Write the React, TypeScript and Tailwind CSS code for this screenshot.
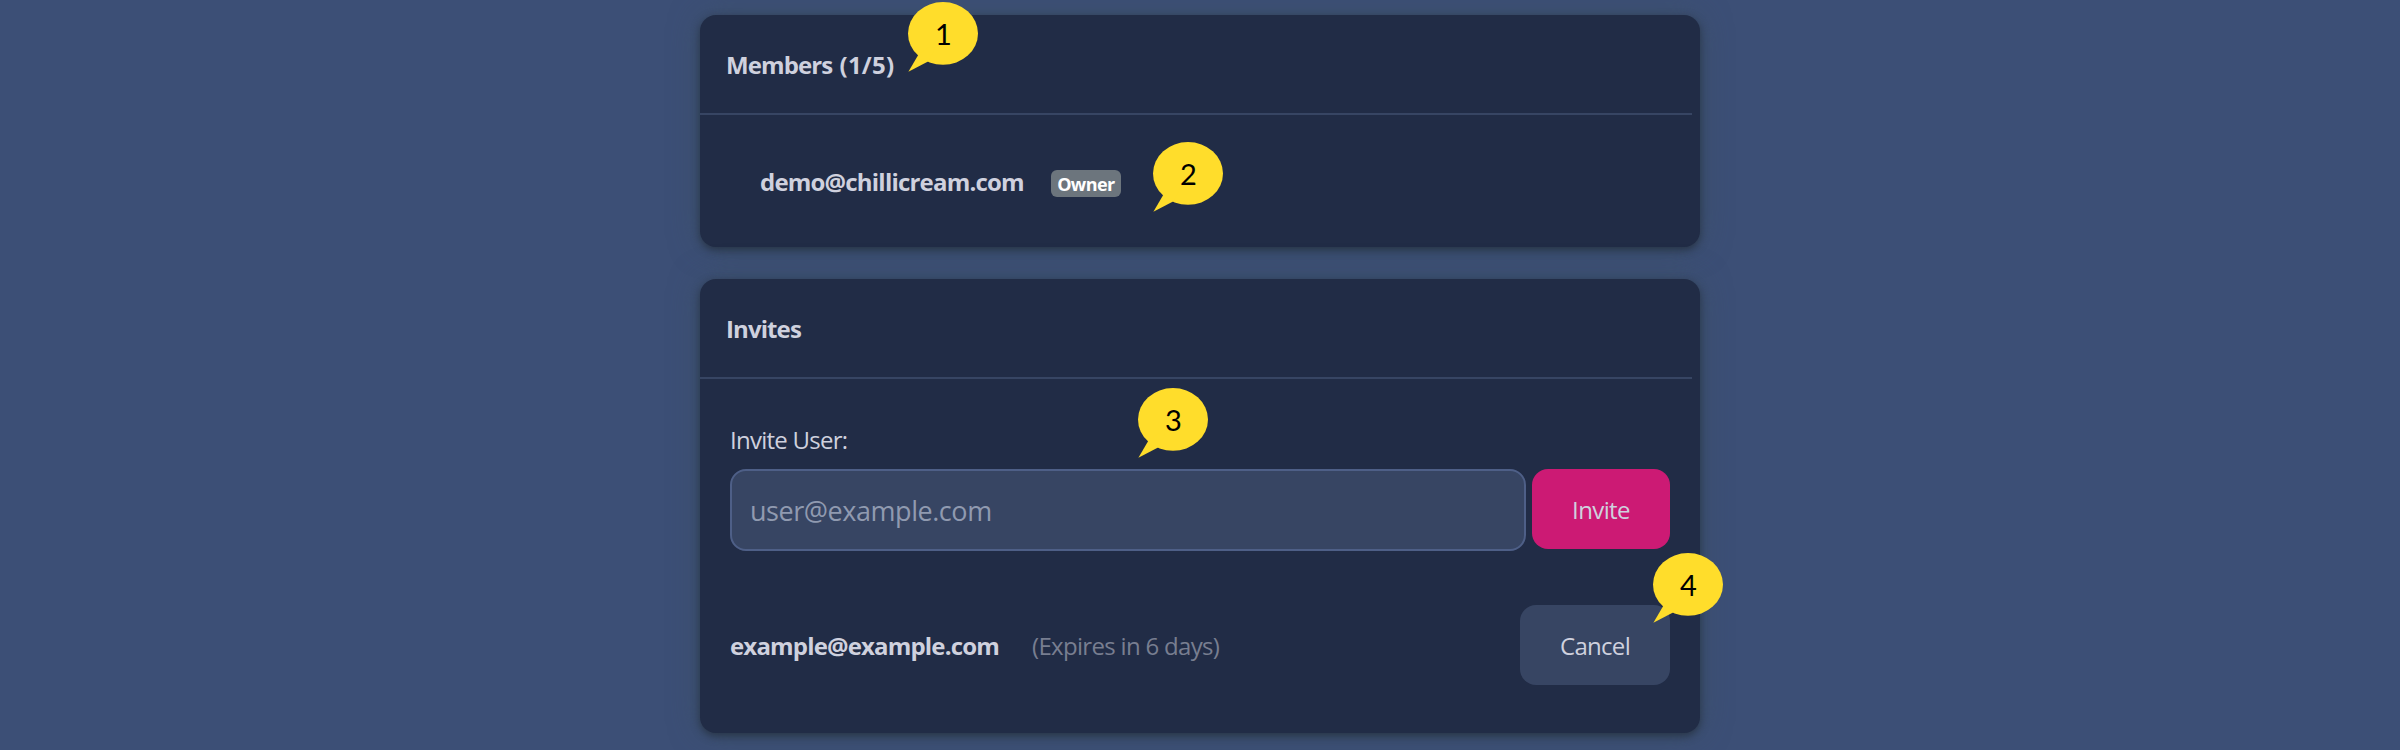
import type { ReactNode } from "react";

function Bubble({ n, place }: { n: number; place: string }) {
  return (
    <div className={`absolute h-[72px] w-[70px] ${place}`}>
      <svg className="absolute inset-0" width="70" height="72" viewBox="0 0 70 72" fill="#ffdd2b" aria-hidden="true">
        <ellipse cx="35" cy="32.4" rx="35" ry="31.4" />
        <path d="M10.5 53.5 L0.4 70.8 L21 60 L30 40 Z" />
      </svg>
      <span className="relative block pt-[16px] pl-[1px] text-center font-[Lato,sans-serif] text-[29px] leading-[34px] text-black">
        {n}
      </span>
    </div>
  );
}

function Card({ title, className, children }: { title: ReactNode; className: string; children: ReactNode }) {
  return (
    <section
      className={`flex w-[1000px] flex-col rounded-[16px] bg-[#212c46] shadow-[0_3px_9px_rgba(33,44,56,0.75),0_0_30px_rgba(60,80,96,0.6)] ${className}`}
    >
      <header className="mr-2 flex h-[100px] shrink-0 items-center border-b-2 border-[#374563] pt-[2px] pl-[26px] font-bold">
        {title}
      </header>
      {children}
    </section>
  );
}

export default function App() {
  return (
    <main className="relative flex h-[750px] w-full flex-col items-center gap-8 overflow-hidden bg-[#3c4f76] pt-[15px] font-['Open_Sans','Noto_Sans',sans-serif] text-[24px] leading-[36px] text-[#cfd1de]">
      <Card
        title={
          <h2 className="tracking-[-0.9px] [word-spacing:2px]">
            Members <span className="tracking-[0.2px]">(1/5)</span>
          </h2>
        }
        className="h-[232px]"
      >
        <div className="flex h-[134px] items-center pt-[2px] pl-[60px]">
          <span className="font-bold tracking-[-0.8px]">demo@chillicream.com</span>
          <span className="mt-[3px] ml-[27px] flex h-[27px] w-[70px] items-center justify-center rounded-[6px] bg-[#6c757d] text-[18px] leading-[18px] font-bold tracking-[-0.6px] text-white">
            Owner
          </span>
        </div>
      </Card>

      <Card title={<h2 className="tracking-[-0.9px]">Invites</h2>} className="h-[454px]">
        <div className="flex flex-col px-[30px] pt-[43px]">
          <label htmlFor="invite-email" className="mb-[11px] tracking-[-0.75px]">
            Invite User:
          </label>
          <div className="flex items-start gap-[6px]">
            <input
              id="invite-email"
              type="email"
              placeholder="user@example.com"
              className="h-[82px] w-[796px] rounded-[16px] border-2 border-[#4e5f87] bg-[#374563] px-[18px] text-[27px] tracking-[-0.45px] placeholder:text-[#909ab0]"
            />
            <button type="button" className="h-20 w-[138px] rounded-[16px] bg-[#cc1a74] pt-[2px] tracking-[-0.6px]">
              Invite
            </button>
          </div>
          <div className="mt-[54px] flex h-20 items-center">
            <span className="pt-[2px] font-bold tracking-[-0.83px]">example@example.com</span>
            <span className="ml-[33px] pt-[2px] tracking-[-0.68px] text-[#787e90]">(Expires in 6 days)</span>
            <button
              type="button"
              className="ml-auto h-20 w-[150px] rounded-[16px] bg-[#374563] pt-[2px] tracking-[-0.7px]"
            >
              Cancel
            </button>
          </div>
        </div>
      </Card>

      <Bubble n={1} place="left-[908px] top-[1px]" />
      <Bubble n={2} place="left-[1153px] top-[141px]" />
      <Bubble n={3} place="left-[1138px] top-[387px]" />
      <Bubble n={4} place="left-[1653px] top-[552px]" />
    </main>
  );
}
